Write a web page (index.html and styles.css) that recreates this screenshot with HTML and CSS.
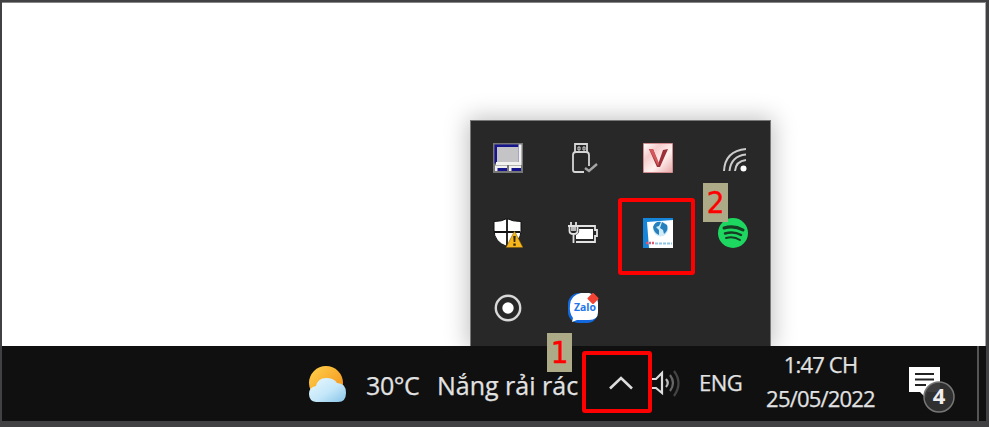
FILE: index.html
```html
<!DOCTYPE html>
<html lang="vi">
<head>
<meta charset="utf-8">
<title>Desktop</title>
<link rel="stylesheet" href="styles.css">
</head>
<body>
<div class="screen">
  <main class="desktop">
    <section class="tray">
      <div class="cell"><svg width="30" height="30" viewBox="0 0 30 30"><path fill="#777" d="M0 0h30v30H0z"/><path fill="#17158c" d="M1.500 1.500H26v19H1.500zM2 23h12v5H2zM16 23h12v5H16z"/><path fill="#f2f2f0" d="M25.500 1.500h3V22H3v-3h22.500zM2 22.500h12V25H4.500v3H2zM16 22.500h12V25h-9.500v3H16z"/><path fill="#c4c4c6" d="M4 4h21.500v15H4z"/></svg></div>
      <div class="cell"><svg width="30" height="30" viewBox="0 0 30 30" fill="none" stroke="#d5d5d5" stroke-width="1.8"><path d="M7 9V1h12v8M16 29H7q-2 0-2-2V12q0-3 3-3h10q3 0 3 3v11"/><path d="M10 4h2v3h-2zM15 4h2v3h-2z" stroke-width="1"/><path stroke="#a5a5a5" stroke-width="2.4" d="M17 25l4 3 8-7"/></svg></div>
      <div class="cell"><svg width="30" height="30" viewBox="0 0 30 30"><defs><linearGradient id="vbg" x1="0" y1="0" x2="1" y2="1"><stop stop-color="#fff"/><stop offset=".3" stop-color="#f6cccc"/><stop offset=".6" stop-color="#fff1ef"/><stop offset="1" stop-color="#e7a6a8"/></linearGradient></defs><path fill="url(#vbg)" stroke="#cf8b8d" d="M.5.5h29v29H.5z"/><path fill="#9c3038" d="M6 6h4l5.500 14L20 7l5-1-8 18h-3z"/><path fill="#d4575b" d="M6 6h4l6 14-1 3z"/></svg></div>
      <div class="cell"><svg width="30" height="30" viewBox="0 0 30 30" fill="none" stroke="#ccc" stroke-width="2"><path d="M6 28Q7 8 28 6M11.500 28Q13 13 28 11.500M17 28Q18 18 28 17"/><circle cx="25.500" cy="25.500" r="3" fill="#fff" stroke="none"/></svg></div>
      <div class="cell"><svg width="30" height="30" viewBox="0 0 30 30"><path fill="#fff" stroke="#111" d="M14 .5q5 3 14 3v9q0 12-14 16Q1 24 1 12V3.500q8 0 13-3z"/><path stroke="#111" stroke-width="1.800" d="M14 1v27M1 14h26"/><path fill="#f5b51c" stroke="#6e5108" stroke-width=".5" d="M21.500 13L30 29.500H13z"/><path fill="#332806" d="M20.300 18h2.400l-.4 6h-1.600zM20.300 25.500h2.400v2.200h-2.400z"/></svg></div>
      <div class="cell"><svg width="32" height="30" viewBox="0 0 32 30" fill="none" stroke="#e2e2e2" stroke-width="1.800"><path d="M12 8h16v4h2v6h-2v6H9"/><path fill="#fff" stroke="none" d="M12 11h14v10H9v-4q4-2 3-6z"/><path d="M4 4v4M9 4v4M1 8h11M2.500 9v4q0 3 4 3t4-3V9M6.500 16v9"/><path fill="#bbb" stroke="none" d="M4 9h5v4H4z"/></svg></div>
      <div class="cell"><svg width="30" height="30" viewBox="0 0 30 30"><path fill="#fff" d="M0 0h30v30H0z"/><path fill="#1585d9" d="M0 0h30v2L4 4l2 26H0z"/><circle cx="17.500" cy="11" r="7.500" fill="#d0ebf8"/><path fill="#2580bd" d="M10 9q2-6 8-5l-2 4-3 1 3 3v5q-5-2-6-8zM19 4l5 3q2 5-3 9l-1-4-3-2z"/><path stroke="#e0566b" stroke-width="2.500" stroke-dasharray="2 1" d="M3 25h8"/><path stroke="#8fc5e4" stroke-width="2" stroke-dasharray="3 1" d="M12 25.500h17"/></svg></div>
      <div class="cell"><svg width="30" height="30" viewBox="0 0 30 30"><circle cx="15" cy="15" r="15" fill="#1ed760"/><g fill="none" stroke="#173d25" stroke-linecap="round"><path stroke-width="3" d="M6 10q10-3 19 2"/><path stroke-width="2.500" d="M7 15.500q9-2.500 16 1.500"/><path stroke-width="2" d="M8 20q8-2 14 2"/></g></svg></div>
      <div class="cell"><svg width="30" height="30" viewBox="0 0 30 30"><circle cx="15" cy="15" r="12.200" fill="none" stroke="#d8d8d8" stroke-width="2.400"/><circle cx="15" cy="15" r="5.700" fill="#fff"/></svg></div>
      <div class="cell"><svg width="31" height="30" viewBox="0 0 31 30"><rect width="30" height="30" rx="11" fill="#1268dc"/><path fill="#fff" d="M13 0h8q9 2 9 10v9q0 8-9 8H9l-5 2 1-4Q1 20 2 12 3 2 13 0z"/><text x="6" y="18" class="zalo" textLength="22" lengthAdjust="spacingAndGlyphs">Zalo</text><path fill="#f34335" d="M25 1l4.500 4.500L25 10l-4.500-4.500z" stroke="#f34335" stroke-width="2" stroke-linejoin="round"/></svg></div>
    </section>
  </main>
  <footer class="taskbar">
    <div class="weather">
      <svg width="40" height="38" viewBox="0 0 40 38"><defs><linearGradient id="sun" x1="0" y1="0" x2="1" y2="1"><stop stop-color="#ffd24b"/><stop offset="1" stop-color="#f28b17"/></linearGradient><linearGradient id="cloud" x1="0" y1="0" x2="1" y2="1"><stop stop-color="#e9f8ff"/><stop offset=".55" stop-color="#c4e7f9"/><stop offset="1" stop-color="#86c3e8"/></linearGradient></defs><circle cx="18" cy="18" r="17" fill="url(#sun)"/><path fill="url(#cloud)" d="M8 37Q1 36 1 29q0-7 7-8 2-8 10-8t11 5q9 0 9 10 0 9-8 9z"/></svg>
      <span class="temp">30°C</span><span class="condition">Nắng rải rác</span>
    </div>
    <svg class="chevron" width="24" height="14" viewBox="0 0 24 14"><path d="M1 12.500L12 2l11 10.500" fill="none" stroke="#ddd" stroke-width="2.600"/></svg>
    <svg class="volume" width="30" height="28" viewBox="0 0 30 28" fill="none" stroke="#ddd" stroke-width="2.200"><path d="M0 10h4l6-6v20l-6-5H0"/><path stroke="#bbb" d="M14 10q3.500 4 0 8"/><path stroke="#666" d="M18 6q6 8 0 16"/><path stroke="#444" d="M22 2q9 12 0 25"/></svg>
    <span class="language">ENG</span>
    <div class="clock"><span class="time">1:47 CH</span><span class="date">25/05/2022</span></div>
    <svg class="notice" width="46" height="48" viewBox="0 0 46 48"><path fill="#fff" d="M0 1h31v25H18l-1 6-6-6H0z"/><path stroke="#222" stroke-width="2" d="M6 8h19M6 13.500h19M6 19h11"/><circle cx="30" cy="31" r="15" fill="#333" fill-opacity=".95" stroke="#777" stroke-width="1.500"/><text x="30" y="38" text-anchor="middle" class="count">4</text></svg>
    <div class="show-desktop"></div>
  </footer>
</div>
<div class="mark mark-arrow"></div><div class="label label-one">1</div>
<div class="mark mark-app"></div><div class="label label-two">2</div>
</body>
</html>
```

FILE: styles.css
```css
* { box-sizing: border-box; }
body { margin: 0; width: 989px; height: 427px; overflow: hidden; position: relative; background: #414042; font-family: "Open Sans", "Noto Sans", sans-serif; color: #e2e2e2; }
svg { display: block; flex: none; }
.screen { height: 427px; padding: 2px 3px 6px 2px; display: flex; flex-direction: column; }
.desktop { height: 344px; flex: none; padding: 117px 0 0 468px; background: #fff; overflow: hidden; border-top: 1px solid #888; border-right: 1px solid #aaa; }
.tray { width: 301px; height: 227px; display: grid; grid-template-columns: repeat(4, 75px); grid-template-rows: repeat(3, 75px); background: #282828; border: 1px solid #777; border-bottom: 0; box-shadow: 0 0 22px 2px rgba(0,0,0,.25); }
.cell { display: flex; align-items: center; justify-content: center; padding: 0 1px 1px 0; }
.taskbar { height: 75px; flex: none; display: flex; align-items: flex-start; background: #101010; overflow: hidden; white-space: nowrap; -webkit-text-stroke: .25px #e2e2e2; }
.weather { display: flex; margin-left: 306px; padding-top: 19px; width: 302px; font-size: 25px; line-height: 26px; }
.temp { margin: 7px 0 0 18px; width: 71px; letter-spacing: -.4px; }
.condition { margin-top: 7px; }
.chevron { margin: 30px 0 0 -1px; }
.volume { margin: 23px 0 0 19px; }
.language { margin: 20px 0 0 17px; width: 50px; font-size: 22px; line-height: 32px; letter-spacing: -.5px; }
.clock { display: flex; flex-direction: column; align-items: center; width: 143px; padding-top: 1px; font-size: 22px; line-height: 34px; letter-spacing: -.8px; }
.notice { margin: 20px 0 0 17px; -webkit-text-stroke: 0; }
.show-desktop { width: 2px; height: 75px; margin-left: auto; margin-right: 7px; background: #555; }
.count { font: 700 22px "Open Sans", sans-serif; fill: #eee; }
.zalo { font: 700 10px "Open Sans", sans-serif; fill: #2475e8; }
.mark { position: absolute; border: 4px solid #f00; border-radius: 3px; }
.mark-arrow { left: 582px; top: 351px; width: 70px; height: 62px; }
.mark-app { left: 618px; top: 198px; width: 77px; height: 77px; }
.label { position: absolute; width: 25px; height: 39px; background: #acaa87; color: #f00; font: 31px/38px "DejaVu Sans Condensed", "DejaVu Sans", sans-serif; font-stretch: condensed; text-align: center; -webkit-text-stroke: .4px #f00; }
.label-one { left: 547px; top: 333px; }
.label-two { left: 703px; top: 183px; }
```
